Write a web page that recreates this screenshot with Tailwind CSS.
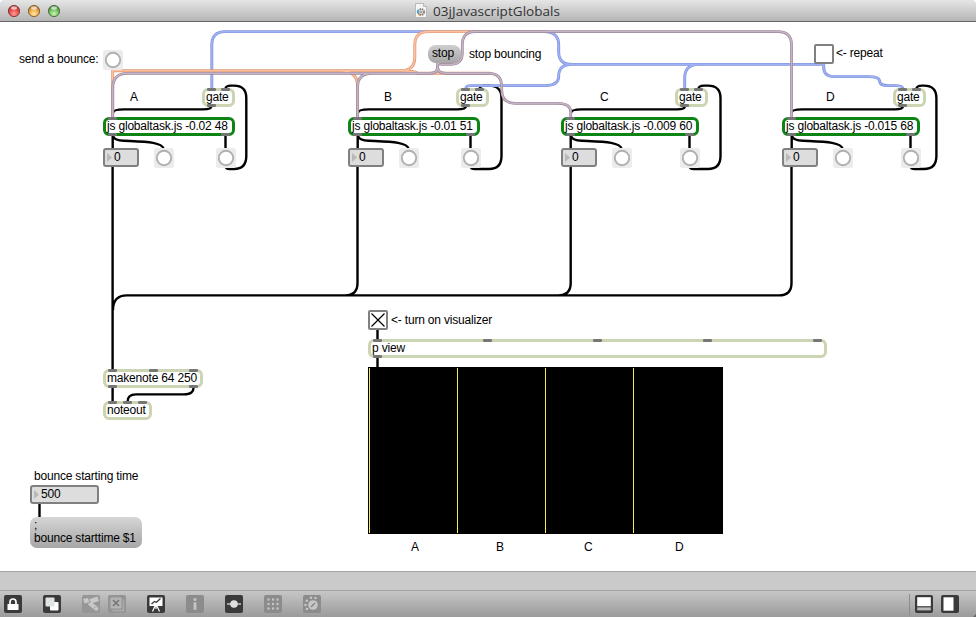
<!DOCTYPE html>
<html lang="en">
<head>
<meta charset="utf-8">
<title>03jJavascriptGlobals</title>
<script src="https://cdn.jsdelivr.net/npm/@tailwindcss/browser@4"></script>
</head>
<body class="bg-white">
<div class="flex h-[617px] w-[976px] flex-col overflow-hidden bg-white font-['Liberation_Sans',Arial,sans-serif] text-[12px] leading-[13px] tracking-[-0.19px] whitespace-nowrap text-black">

  <!-- Title bar -->
  <header class="relative flex h-[22px] shrink-0 items-center justify-center rounded-t-[4px] border-b border-[#666] bg-linear-to-b from-[#e6e6e6] to-[#b5b5b5]">
    <svg class="absolute top-0 left-0" width="70" height="21" viewBox="0 0 70 21">
      <defs>
        <radialGradient id="r" cx=".5" cy=".75" r=".65"><stop offset="0" stop-color="#ff9d98"/><stop offset=".6" stop-color="#e8504e"/><stop offset="1" stop-color="#b03535"/></radialGradient>
        <radialGradient id="y" cx=".5" cy=".75" r=".65"><stop offset="0" stop-color="#ffe8a8"/><stop offset=".6" stop-color="#efae4c"/><stop offset="1" stop-color="#ab752c"/></radialGradient>
        <radialGradient id="g" cx=".5" cy=".75" r=".65"><stop offset="0" stop-color="#ccf2b0"/><stop offset=".6" stop-color="#78c266"/><stop offset="1" stop-color="#46823a"/></radialGradient>
      </defs>
      <g stroke-width="1"><circle cx="14" cy="11" r="5.6" fill="url(#r)" stroke="#8a3a38"/><circle cx="34" cy="11" r="5.6" fill="url(#y)" stroke="#8c6430"/><circle cx="54" cy="11" r="5.6" fill="url(#g)" stroke="#4b7343"/></g>
      <g fill="#fff" opacity=".65"><ellipse cx="14" cy="8" rx="3" ry="1.7"/><ellipse cx="34" cy="8" rx="3" ry="1.7"/><ellipse cx="54" cy="8" rx="3" ry="1.7"/></g>
    </svg>
    <div class="flex items-center gap-[6px]">
      <svg width="12" height="15" viewBox="0 0 12 15"><path d="M.5.5h8l3 3v11H.5z" fill="#f6f6f6" stroke="#b9b9b9"/><path d="M8.5.5v3h3" fill="#ddd" stroke="#b9b9b9"/><circle cx="6.3" cy="9" r="2.8" fill="none" stroke="#777" stroke-width="1.8" stroke-dasharray="1.5 .7"/><path d="M3 6.5a4 4 0 0 0 0 4" fill="none" stroke="#39a9dc" stroke-width="1.2"/><path d="M3.4 11.3l2 1.4" stroke="#f08a3a" stroke-width="1.2"/><circle cx="6.3" cy="9" r="1.2" fill="#999"/></svg>
      <h1 class="w-[128px] font-['Open_Sans','Noto_Sans',sans-serif] text-[13.5px] leading-[20px] tracking-[0.05px] text-[#333]">03jJavascriptGlobals</h1>
    </div>
  </header>

  <!-- Patcher canvas -->
  <main class="relative h-[549px] shrink-0">
    <svg class="absolute top-[-22px] left-0" width="976" height="571" viewBox="0 0 976 571" fill="none">
      <defs>
        <path id="w-blue" d="M211.8 88V45Q211.8 31.6 225 31.6H544Q558.7 31.6 558.7 45V52Q558.7 64.4 572 64.4H823M466 88Q466 85.6 471 85.6H545Q558.7 85.6 558.7 76Q558.7 64.4 572 64.4M684.7 88V78Q684.7 65 698 64.4M823.7 64V67Q823.7 76.6 834 76.6H868Q879.5 76.6 879.5 81Q880 85.6 888 85.6H895Q902.7 85.6 902.7 88"/>
        <path id="w-orange" d="M112.7 70V117M112.7 70.8H401Q414.8 70.8 414.8 57V45Q414.8 31.6 428 31.6H540M340 70.8Q357.6 71 357.6 86V117M401 70.8Q414 71 418 73.3H490"/>
        <path id="w-purple" d="M437.6 62V67Q437.6 73.3 430 73.3H128Q112.7 73.3 112.7 88V117M372 73.3Q357.6 73.3 357.6 87V117M437.6 67Q437.6 73.3 446 73.3H489Q501.7 73.3 501.7 87V90Q501.7 103.3 515 103.3H558Q570.7 103.3 570.7 112V117M437.6 62Q438 64.4 442 64.4H450Q462.3 64.4 462.3 53V45Q462.3 31.6 475 31.6H778Q791.5 31.6 791.5 45V117"/>
        <path id="lead" d="M113 136Q114 140.4 124 140.8C145 141.8 162 141.8 163.8 149M112.7 136V150"/>
      </defs>
      <g stroke="#000" stroke-width="2.4" stroke-linejoin="round">
        <use href="#lead"/><use href="#lead" x="245"/><use href="#lead" x="458"/><use href="#lead" x="679"/>
        <path d="M211.500 106Q211.500 109.400 203 109.400H124Q113 109.400 113 113M466 106Q466 109.400 457 109.400H369Q358 109.400 358 113M685 106Q685 109.400 677 109.400H582Q571 109.400 571 113M903 106Q903 109.400 895 109.400H802Q791.500 109.400 791.500 113"/>
        <path d="M225.5 136V149M470.5 136V149M689.5 136V149M910.5 136V149"/>
        <path d="M225.5 89Q225.5 85.6 231 85.6H234Q246.3 85.6 246.3 98V156Q246.3 169 234 169H230Q226 169 226 167"/>
        <path d="M479.7 89Q479.7 85.6 485 85.6H489Q501.5 85.6 501.5 98V156Q501.5 169 489 169H475Q471 169 471 167"/>
        <path d="M698.5 89Q698.5 85.6 704 85.6H708Q720.5 85.6 720.5 98V156Q720.5 169 708 169H694Q690 169 690 167"/>
        <path d="M916.5 89Q916.5 85.6 922 85.6H924Q936.4 85.6 936.4 98V156Q936.4 169 924 169H915Q911 169 911 167"/>
        <path d="M112.6 166V370M357.5 166V283Q357.5 295.4 345 295.4M570.7 166V283Q570.7 295.4 558 295.4M791.5 166V283Q791.5 295.4 779 295.4H127Q113 295.4 113 310"/>
        <path d="M112.6 387V402M193.5 387Q194 394.4 184 394.4H136Q127.5 394.4 127.5 402M39.5 503V518M377.5 329V341M377.5 357V368"/>
      </g>
      <g stroke="#7f90db" stroke-width="2.9"><use href="#w-blue"/></g><g stroke="#9eb1f4" stroke-width="1.6"><use href="#w-blue"/></g>
      <g stroke="#dd9672" stroke-width="2.9"><use href="#w-orange"/></g><g stroke="#fcc09e" stroke-width="1.6"><use href="#w-orange"/></g>
      <g stroke="#9b8798" stroke-width="2.8"><use href="#w-purple"/></g><g stroke="#c6b3c6" stroke-width="1.5"><use href="#w-purple"/></g>
    </svg>

    <!-- Comments -->
    <p class="absolute top-[31px] left-[19px]">send a bounce:</p>
    <p class="absolute top-[26px] left-[469px]">stop bouncing</p>
    <p class="absolute top-[25px] left-[836px]">&lt;- repeat</p>
    <p class="absolute top-[69px] left-[130px]">A</p>
    <p class="absolute top-[69px] left-[384px]">B</p>
    <p class="absolute top-[69px] left-[600px]">C</p>
    <p class="absolute top-[69px] left-[826px]">D</p>
    <p class="absolute top-[292px] left-[391px]">&lt;- turn on visualizer</p>
    <p class="absolute top-[448px] left-[34px]">bounce starting time</p>
    <p class="absolute top-[519px] left-[411px]">A</p>
    <p class="absolute top-[519px] left-[496px]">B</p>
    <p class="absolute top-[519px] left-[584px]">C</p>
    <p class="absolute top-[519px] left-[675px]">D</p>

    <!-- Messages -->
    <div class="absolute top-[23px] left-[428px] h-[18px] w-[33px] rounded-[8px] bg-linear-to-b from-[#cfcfcf] to-[#a6a6a6] pt-[2px] pl-[4px]">stop</div>
    <div class="absolute top-[495px] left-[30px] h-[31px] w-[112px] rounded-[7px] bg-linear-to-b from-[#d6d6d6] to-[#a6a6a6] pt-[2px] pl-[4px]">;<br>bounce starttime $1</div>

    <!-- Gates -->
    <div class="absolute top-[66px] left-[202px] h-[19px] w-[33px] rounded-[6px] border-3 border-[#ccd5b2] bg-white pl-[1px]">gate</div>
    <div class="absolute top-[66px] left-[456px] h-[19px] w-[33px] rounded-[6px] border-3 border-[#ccd5b2] bg-white pl-[1px]">gate</div>
    <div class="absolute top-[66px] left-[675px] h-[19px] w-[33px] rounded-[6px] border-3 border-[#ccd5b2] bg-white pl-[1px]">gate</div>
    <div class="absolute top-[66px] left-[893px] h-[19px] w-[33px] rounded-[6px] border-3 border-[#ccd5b2] bg-white pl-[1px]">gate</div>

    <!-- Script objects -->
    <div class="absolute top-[95px] left-[103px] h-[19px] w-[132px] rounded-[6px] border-3 border-[#0d8515] bg-white pl-[1px]">js globaltask.js -0.02 48</div>
    <div class="absolute top-[95px] left-[348px] h-[19px] w-[132px] rounded-[6px] border-3 border-[#0d8515] bg-white pl-[1px]">js globaltask.js -0.01 51</div>
    <div class="absolute top-[95px] left-[561px] h-[19px] w-[138px] rounded-[6px] border-3 border-[#0d8515] bg-white pl-[1px]">js globaltask.js -0.009 60</div>
    <div class="absolute top-[95px] left-[782px] h-[19px] w-[138px] rounded-[6px] border-3 border-[#0d8515] bg-white pl-[1px]">js globaltask.js -0.015 68</div>

    <!-- Number boxes -->
    <div class="absolute top-[126px] left-[103px] h-[19px] w-[36px] rounded-[3px] border-2 border-[#808080] bg-[#ddd] pt-[1px] pl-[9px]">0</div>
    <div class="absolute top-[126px] left-[348px] h-[19px] w-[36px] rounded-[3px] border-2 border-[#808080] bg-[#ddd] pt-[1px] pl-[9px]">0</div>
    <div class="absolute top-[126px] left-[561px] h-[19px] w-[36px] rounded-[3px] border-2 border-[#808080] bg-[#ddd] pt-[1px] pl-[9px]">0</div>
    <div class="absolute top-[126px] left-[782px] h-[19px] w-[36px] rounded-[3px] border-2 border-[#808080] bg-[#ddd] pt-[1px] pl-[9px]">0</div>
    <div class="absolute top-[463px] left-[30px] h-[19px] w-[69px] rounded-[3px] border-2 border-[#808080] bg-[#ddd] pt-[1px] pl-[9px]">500</div>

    <!-- Note output and view objects -->
    <div class="absolute top-[347px] left-[103px] h-[19px] w-[100px] rounded-[6px] border-3 border-[#ccd5b2] bg-white pl-[1px]">makenote 64 250</div>
    <div class="absolute top-[379px] left-[103px] h-[19px] w-[49px] rounded-[6px] border-3 border-[#ccd5b2] bg-white pl-[1px]">noteout</div>
    <div class="absolute top-[317px] left-[368px] h-[19px] w-[459px] rounded-[6px] border-3 border-[#ccd5b2] bg-white pl-[1px]">p view</div>

    <!-- Toggles -->
    <div class="absolute top-[22px] left-[814px] size-[20px] rounded-[2px] border-2 border-[#808080] bg-white"></div>
    <div class="absolute top-[288px] left-[368px] size-[20px] rounded-[2px] border-2 border-[#808080] bg-white"><svg width="16" height="16" viewBox="0 0 16 16"><path d="M1.5 1.5l13 13M14.5 1.5l-13 13" stroke="#000" stroke-width="1.2"/></svg></div>

    <!-- Visualizer -->
    <div class="absolute top-[345px] left-[368px] flex h-[167px] w-[355px] bg-black py-px pl-px">
      <div class="w-[88px] border-l border-[#f6ec4b]"></div><div class="w-[88px] border-l border-[#f6ec4b]"></div><div class="w-[88px] border-l border-[#f6ec4b]"></div><div class="w-[88px] border-l border-[#f6ec4b]"></div>
    </div>

    <!-- Bangs, inlets and outlets -->
    <svg class="absolute top-[-22px] left-0" width="976" height="571" viewBox="0 0 976 571">
      <defs>
        <g id="bang"><rect width="20" height="20" rx="2.5" fill="#ececec"/><circle cx="10" cy="10" r="7.2" fill="#fff" stroke="#b0b0b0" stroke-width="1.9"/></g>
        <rect id="nub" width="9" height="3" rx="1.3" fill="#767676"/>
        <path id="tri" d="M107 153l5 4.5-5 4.5z" fill="#b9b9b9"/>
      </defs>
      <use href="#bang" x="103" y="50"/>
      <use href="#bang" x="154" y="148"/><use href="#bang" x="399" y="148"/><use href="#bang" x="612" y="148"/><use href="#bang" x="833" y="148"/>
      <use href="#bang" x="216" y="148"/><use href="#bang" x="461" y="148"/><use href="#bang" x="680" y="148"/><use href="#bang" x="901" y="148"/>
      <use href="#tri"/><use href="#tri" x="245"/><use href="#tri" x="458"/><use href="#tri" x="679"/><use href="#tri" x="-73" y="337"/>
      <use href="#nub" x="207" y="88"/><use href="#nub" x="221" y="88"/><use href="#nub" x="207" y="104"/>
      <use href="#nub" x="461" y="88"/><use href="#nub" x="475" y="88"/><use href="#nub" x="461" y="104"/>
      <use href="#nub" x="680" y="88"/><use href="#nub" x="694" y="88"/><use href="#nub" x="680" y="104"/>
      <use href="#nub" x="898" y="88"/><use href="#nub" x="912" y="88"/><use href="#nub" x="898" y="104"/>
      <use href="#nub" x="108" y="117"/><use href="#nub" x="108" y="133"/><use href="#nub" x="221" y="133"/>
      <use href="#nub" x="353" y="117"/><use href="#nub" x="353" y="133"/><use href="#nub" x="466" y="133"/>
      <use href="#nub" x="566" y="117"/><use href="#nub" x="566" y="133"/><use href="#nub" x="685" y="133"/>
      <use href="#nub" x="787" y="117"/><use href="#nub" x="787" y="133"/><use href="#nub" x="906" y="133"/>
      <use href="#nub" x="373" y="339"/><use href="#nub" x="483" y="339"/><use href="#nub" x="593" y="339"/><use href="#nub" x="703" y="339"/><use href="#nub" x="813" y="339"/><use href="#nub" x="373" y="355"/>
      <use href="#nub" x="108" y="369"/><use href="#nub" x="149" y="369"/><use href="#nub" x="189" y="369"/><use href="#nub" x="108" y="385"/><use href="#nub" x="189" y="385"/>
      <use href="#nub" x="108" y="401"/><use href="#nub" x="123" y="401"/><use href="#nub" x="138" y="401"/>
    </svg>
  </main>

  <!-- Status strip and toolbar -->
  <div class="h-[19px] shrink-0 border-t border-[#a6a6a6] bg-[#cacaca]"></div>
  <footer class="relative flex h-[27px] shrink-0 items-center border-t border-[#a3a3a3] bg-linear-to-b from-[#c6c6c6] to-[#9b9b9b] pr-[17px] pl-[4px]">
    <div class="flex gap-[21px]">
      <svg width="18" height="18" viewBox="0 0 18 18"><rect width="18" height="18" rx="2" fill="#3a3a3a"/><path d="M6 9V7a3 3 0 0 1 6 0v2" fill="none" stroke="#fff" stroke-width="1.7"/><rect x="3.5" y="9" width="11" height="6" fill="#fff"/></svg>
      <svg width="18" height="18" viewBox="0 0 18 18"><rect width="18" height="18" rx="2" fill="#3a3a3a"/><rect x="7" y="7" width="8.5" height="8.5" rx="1" fill="#fff"/><rect x="2.5" y="2.5" width="9" height="9" rx="1" fill="#dfe5e5"/></svg>
      <div class="flex gap-[8px]">
        <svg width="18" height="18" viewBox="0 0 18 18"><rect width="18" height="18" rx="2" fill="#969696"/><g fill="#c8c8c8"><path d="M1 4l5-1 1.500 4-5 1.500z"/><path d="M7.500 4l8-2.500 1.500 4.500-8 2.500z"/><path d="M5.500 9l3.500-2 7.500 5-2.500 4.500z"/></g><circle cx="14.300" cy="13.800" r="2.300" fill="#c8c8c8" stroke="#999" stroke-width=".7"/></svg>
        <svg width="18" height="18" viewBox="0 0 18 18"><rect width="18" height="18" rx="2" fill="#949494"/><path d="M4.500 15.500h11v-11" fill="none" stroke="#adadad" stroke-width="1.300"/><rect x="2.500" y="2.500" width="11" height="11" rx="1" fill="#b5b5b5"/><path d="M5 5l6 6M11 5l-6 6" stroke="#777" stroke-width="1.700"/></svg>
      </div>
      <svg width="18" height="18" viewBox="0 0 18 18"><rect width="18" height="18" rx="2" fill="#3a3a3a"/><path d="M2.500 2.500h13v8.500h-13z" fill="#fff"/><path d="M4.500 9l3-2.500 2 .8 4-3.800" fill="none" stroke="#333" stroke-width="1.200"/><path d="M8 11l-2.500 5.500M10 11l2.500 5.500M9 11v3" stroke="#fff" stroke-width="1.200"/></svg>
      <svg width="18" height="18" viewBox="0 0 18 18"><rect width="18" height="18" rx="2" fill="#8c8c8c"/><circle cx="9" cy="4.500" r="1.500" fill="#c6c6c6"/><path d="M7.600 7.300h2.800v7.500H7.600z" fill="#c6c6c6"/></svg>
      <svg width="18" height="18" viewBox="0 0 18 18"><rect width="18" height="18" rx="2" fill="#3a3a3a"/><path d="M2 9h14" stroke="#aab0b0" stroke-width="1.800"/><circle cx="9" cy="9" r="3.800" fill="#e4dfdf"/></svg>
      <svg width="18" height="18" viewBox="0 0 18 18"><rect width="18" height="18" rx="2" fill="#8c8c8c"/><path d="M4.500 4.500h10M4.500 9h10M4.500 13.500h10" stroke="#c6c6c6" stroke-width="2.400" stroke-linecap="round" stroke-dasharray=".01 4.500"/></svg>
      <svg width="18" height="18" viewBox="0 0 18 18"><rect width="18" height="18" rx="2" fill="#8c8c8c"/><circle cx="10" cy="10" r="4.800" fill="#c6c6c6"/><path d="M8 12l4-4" stroke="#858585" stroke-width="1.500"/><g fill="#c6c6c6"><circle cx="2.500" cy="10" r="1.300"/><circle cx="3.800" cy="5.700" r="1.300"/><circle cx="8" cy="2.800" r="1.300"/><circle cx="12.500" cy="3" r="1.300"/><circle cx="4" cy="14" r="1.300"/></g></svg>
    </div>
    <div class="ml-auto flex items-center">
      <div class="mr-[5px] h-[21px] w-px bg-[#8c8c8c]"></div>
      <svg class="mr-[8px]" width="18" height="18" viewBox="0 0 18 18"><rect width="18" height="18" rx="2" fill="#3a3a3a"/><rect x="2.200" y="2.200" width="13.600" height="9" fill="#fff"/><rect x="2.200" y="12.400" width="13.600" height="3" fill="#b9b9b9"/></svg>
      <svg width="18" height="18" viewBox="0 0 18 18"><rect width="18" height="18" rx="2" fill="#3a3a3a"/><rect x="2.500" y="2.300" width="10" height="13.400" fill="#fff"/></svg>
    </div>
    <div class="absolute right-0 bottom-0 size-[3px] bg-[#666] [clip-path:polygon(100%_0,100%_100%,0_100%)]"></div>
  </footer>
</div>
</body>
</html>
